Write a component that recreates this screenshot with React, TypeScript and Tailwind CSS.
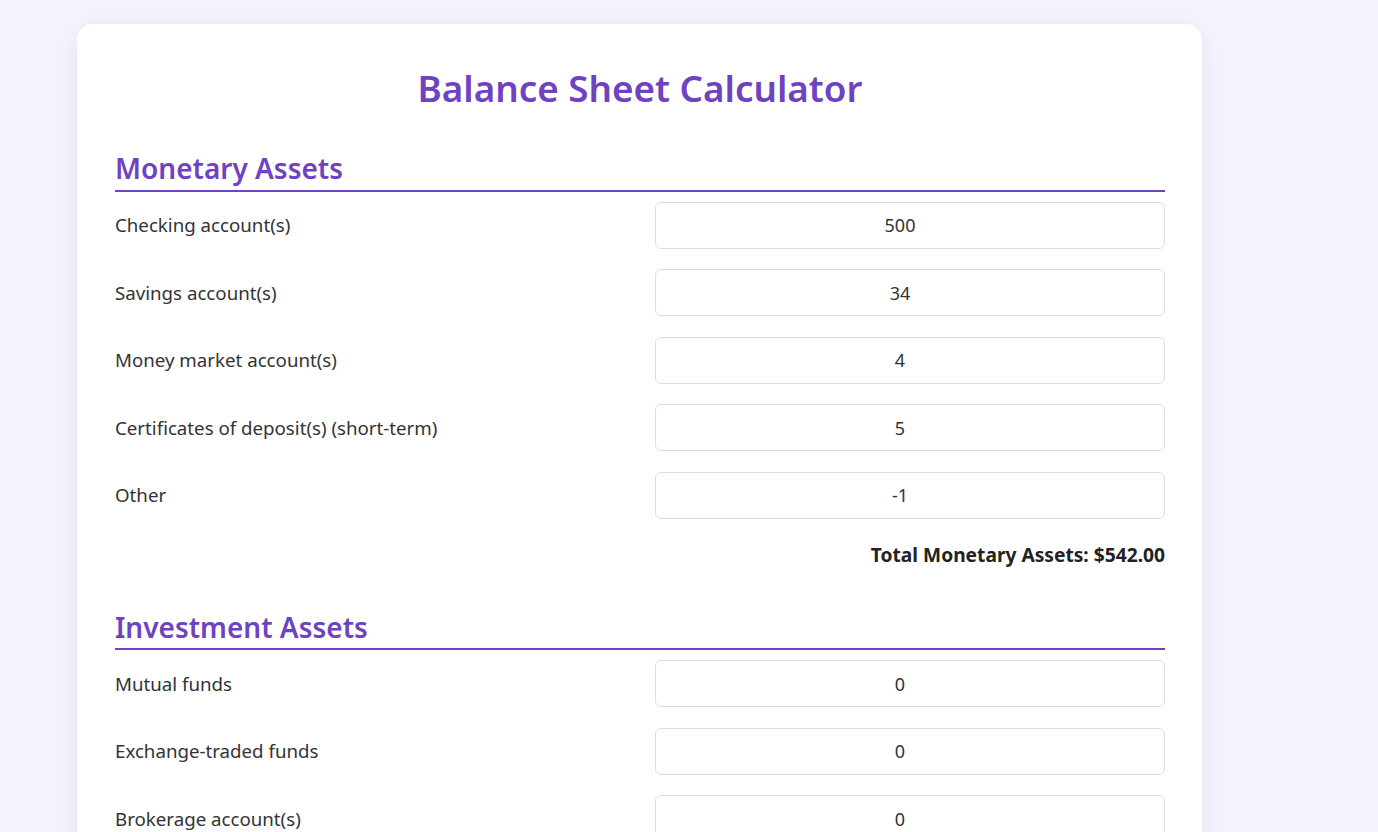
import React from "react";

const monetary = [
  ["Checking account(s)", "500"],
  ["Savings account(s)", "34"],
  ["Money market account(s)", "4"],
  ["Certificates of deposit(s) (short-term)", "5"],
  ["Other", "-1"],
];

const investment = [
  ["Mutual funds", "0"],
  ["Exchange-traded funds", "0"],
  ["Brokerage account(s)", "0"],
  ["Bonds", "0"],
];

function Row({ label, value }: { label: string; value: string }) {
  return (
    <div className="grid grid-cols-2 gap-x-[30px] items-center mb-[20.5px]">
      <label className="text-[18.7px] text-[#333]">{label}</label>
      <input
        defaultValue={value}
        className="h-[47px] w-full border border-[#ddd] rounded-md text-center text-[18px] text-[#333] bg-white outline-none pl-[10px] pr-[30px]"
      />
    </div>
  );
}

function Section({ title, rows, total }: { title: string; rows: string[][]; total?: string }) {
  return (
    <div className="mb-[39px]">
      <h2 className="text-[28px] font-semibold text-[#6f42c1] border-b-2 border-[#6f42c1] leading-[1.3] pb-[3px] mb-[10px]">
        {title}
      </h2>
      {rows.map(([l, v]) => (
        <Row key={l} label={l} value={v} />
      ))}
      {total && (
        <div className="text-right text-[19.2px] font-bold text-[#222] pt-[2px]">{total}</div>
      )}
    </div>
  );
}

export default function App() {
  return (
    <div
      className="min-h-screen bg-[#f6f3fe] pt-6 pl-[77px] overflow-hidden"
      style={{ fontFamily: '"Segoe UI", "Noto Sans", sans-serif' }}
    >
      <div className="w-[1125px] bg-white rounded-2xl shadow-[0_4px_24px_rgba(80,60,140,0.10)] pl-[38px] pr-[37px] pt-[42px] pb-10">
        <h1 className="text-center text-[36.8px] font-semibold text-[#6f42c1] mb-[40px] leading-[1.2]">
          Balance Sheet Calculator
        </h1>
        <Section title="Monetary Assets" rows={monetary} total="Total Monetary Assets: $542.00" />
        <Section title="Investment Assets" rows={investment} />
      </div>
    </div>
  );
}
